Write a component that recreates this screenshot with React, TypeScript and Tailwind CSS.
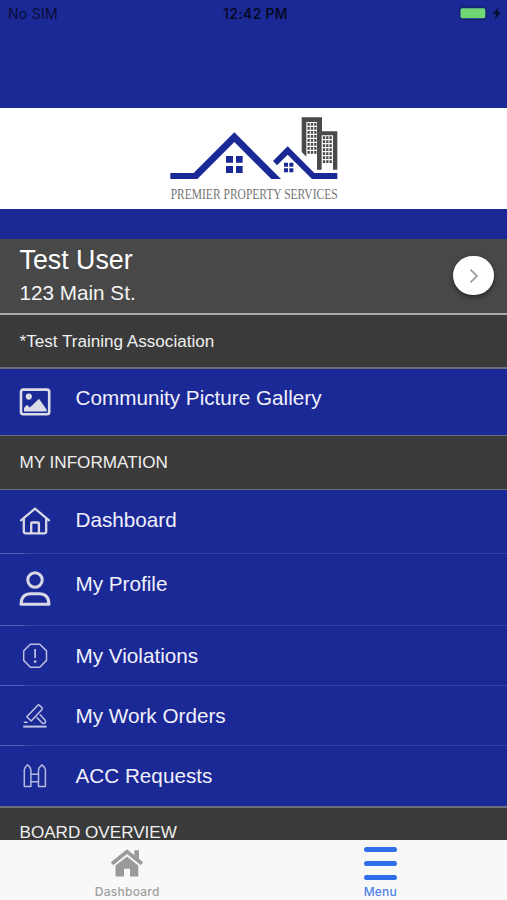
import type { ReactNode } from "react";

/** Company logo: two roofs, an office block and the name below. */
function Logo() {
  return (
    <svg
      width="176"
      height="90"
      viewBox="18 33 528 270"
      className="overflow-visible"
      role="img"
      aria-label="Premier Property Services"
    >
      <g fill="#1b2997">
        <path d="M31 204H101L223 82L363 222H334L223 111L112 222H31Z" />
        <path d="M339 168L383 124L463 204H532V222H456L383 149L351 181Z" />
        <path d="M198 153h21v20h-21zM228 153h20v20h-20zM198 183h21v21h-21zM228 183h20v21h-20z" />
        <path d="M372 173h12v12h-12zM388 173h12v12h-12zM372 190h12v12h-12zM388 190h12v12h-12z" />
      </g>
      <path
        d="M425 37H486V79H532V194H519V91H485V194H471V51H439V155L425 141Z"
        fill="#4b4a4a"
      />
      <g stroke="#4b4a4a" strokeWidth="7" strokeDasharray="8 4">
        <path d="M446 54V150M456 54V150M466 54V150" />
        <path d="M492 94V178M502 94V178M512 94V178" />
      </g>
      <text
        x="32"
        y="282"
        textLength="501"
        lengthAdjust="spacingAndGlyphs"
        fontFamily="'Liberation Serif', serif"
        fontSize="41"
        fill="#757373"
      >
        PREMIER PROPERTY SERVICES
      </text>
    </svg>
  );
}

function GalleryIcon() {
  return (
    <svg width="32" height="28" viewBox="0 0 32 28" fill="none">
      <rect x="2" y="1.6" width="28.2" height="24.6" rx="2.2" stroke="#dcdce6" strokeWidth="2.6" />
      <circle cx="9.8" cy="8.6" r="3.1" fill="#dcdce6" />
      <path d="M5 23.5V20L8 16.8L10.5 19.5L13 17.5L20 10.8L27.6 21.5V23.5Z" fill="#dcdce6" />
    </svg>
  );
}

function HomeIcon() {
  return (
    <svg
      width="32"
      height="28"
      viewBox="0 0 32 28"
      fill="none"
      stroke="#d9d9e6"
      strokeWidth="2.3"
      strokeLinejoin="round"
      strokeLinecap="round"
    >
      <path d="M2 13.3L16 1.7L30 13.3" />
      <path d="M4.8 12V24.3Q4.8 26.4 6.9 26.4H25.1Q27.2 26.4 27.2 24.3V12" />
      <path d="M12.2 26V16.2Q12.2 15.5 13 15.5H19Q19.9 15.5 19.9 16.2V26" />
    </svg>
  );
}

function ProfileIcon() {
  return (
    <svg width="32" height="36" viewBox="0 0 32 36" fill="none" stroke="#d9d9e6" strokeWidth="3">
      <circle cx="16" cy="9" r="7.2" />
      <path
        d="M2 33.3Q2.2 22.7 12 22.7H20Q29.8 22.7 30 33.3Z"
        strokeLinejoin="round"
      />
    </svg>
  );
}

function ViolationIcon() {
  return (
    <svg width="26" height="26" viewBox="0 0 26 26" fill="none" stroke="#b9bddf" strokeWidth="1.5">
      <path d="M8.4 1.2H17.8L24.5 7.9V17.4L17.8 24.2H8.4L1.7 17.4V7.9Z" strokeLinejoin="round" />
      <path d="M13.1 6V15" strokeWidth="1.8" />
      <circle cx="13.1" cy="18.6" r="1.4" fill="#b9bddf" stroke="none" />
    </svg>
  );
}

function GavelIcon() {
  return (
    <svg
      width="26"
      height="26"
      viewBox="0 0 26 26"
      fill="none"
      stroke="#c0c4e2"
      strokeWidth="1.5"
      strokeLinejoin="round"
    >
      <path d="M4.8 13.7L15.8 2.2Q16.6 1.5 17.4 2.2L20 4.8Q20.7 5.6 20 6.4L9.2 18Z" />
      <path d="M14.6 14.2L20 19.7Q21.4 21.2 23 19.9Q24.3 18.4 23 17L17.8 11.6" />
      <path d="M1.8 19.3H5.6" />
      <path d="M1.2 23.6H24.6" strokeWidth="2" />
    </svg>
  );
}

function FenceIcon() {
  return (
    <svg
      width="26"
      height="26"
      viewBox="0 0 26 26"
      fill="none"
      stroke="#b4b9dd"
      strokeWidth="1.5"
      strokeLinejoin="round"
    >
      <path d="M2.3 23.5V6.6Q3 4 5.6 1.8Q8.2 4 8.9 6.6V23.5Z" />
      <path d="M16.5 23.5V6.6Q17.2 4 20 1.8Q22.7 4 23.4 6.6V23.5Z" />
      <path d="M8.9 11.2H16.5M8.9 18.8H16.5" />
    </svg>
  );
}

function SectionHeader({ className, children }: { className: string; children: ReactNode }) {
  return (
    <h2
      className={`shrink-0 border-[#6b6e7c] bg-[#3a3a3a] pl-[19.5px] leading-5 text-[#f0f0f0] ${className}`}
    >
      {children}
    </h2>
  );
}

type MenuItem = {
  label: string;
  icon: ReactNode;
  row: string;
  last?: boolean;
};

const ITEMS: MenuItem[] = [
  { label: "Dashboard", icon: <HomeIcon />, row: "h-16 pt-[17px]" },
  { label: "My Profile", icon: <ProfileIcon />, row: "h-[72px] pt-[17px]" },
  { label: "My Violations", icon: <ViolationIcon />, row: "h-[60px] pt-[17px]" },
  { label: "My Work Orders", icon: <GavelIcon />, row: "h-[60px] pt-[17px]" },
  { label: "ACC Requests", icon: <FenceIcon />, row: "h-[60px] pt-[17px]", last: true },
];

function MenuRow({ item }: { item: MenuItem }) {
  return (
    <li className="flex flex-col">
      <div className={`flex items-start ${item.row}`}>
        <span className="flex w-[69px] shrink-0 justify-center">{item.icon}</span>
        <span className="pl-[6.5px] text-[20.7px] leading-[26px]">{item.label}</span>
      </div>
      {/* The hairline is brighter under the icon inset */}
      {!item.last && (
        <div className="-mt-px flex h-px">
          <span className="w-[25px] bg-[#5360b7]" />
          <span className="flex-1 bg-[#3442a0]" />
        </div>
      )}
    </li>
  );
}

export default function App() {
  return (
    <div className="flex h-[900px] w-[507px] flex-col overflow-hidden bg-[#1b2997] font-['Liberation_Sans',Arial,sans-serif] text-[#f0f0fa]">
      {/* Status bar */}
      <div className="grid h-[108px] shrink-0 grid-cols-3 items-start px-[8px] pt-1 font-['Inter',sans-serif] text-[14px] leading-5 text-[#080d36]">
        <span className="tracking-[0.3px]">No SIM</span>
        <span className="pl-1 text-center text-[13.8px] font-semibold tracking-[0.4px] text-[#060926]">
          12:42 PM
        </span>
        <span className="flex justify-end">
          <svg width="46" height="18" viewBox="0 0 46 18" className="-mr-1">
            <rect x="2.3" y="3" width="27" height="12.5" rx="3.2" fill="none" stroke="#14205f" />
            <rect x="3.5" y="4.3" width="24.8" height="10" rx="1.8" fill="#70d777" />
            <path d="M30.8 7.2q1.4 1.8 0 3.8z" fill="#14205f" />
            <path d="M41.4 3.4L35.6 10H39.2L37.8 15.2L43.8 8.3H40.2Z" fill="#070b27" />
          </svg>
        </span>
      </div>

      <header className="flex h-[101px] shrink-0 justify-center bg-white pt-2">
        <Logo />
      </header>

      {/* Signed-in user */}
      <section className="mt-[30px] flex h-[76px] shrink-0 items-start justify-between border-b-2 border-[#aaaaaa] bg-[#484848] pr-[13px] pl-[19.5px]">
        <div>
          <div className="pt-[5px] text-[26.8px] leading-[32px] text-white">Test User</div>
          <div className="pt-[5px] text-[20.7px] leading-6 text-[#f4f4f4]">123 Main St.</div>
        </div>
        <button
          type="button"
          aria-label="Open profile"
          className="mt-[17px] flex h-[39px] w-[41px] items-center justify-center rounded-full bg-white shadow-[0_2px_5px_rgba(0,0,0,0.5)]"
        >
          <svg width="12" height="18" viewBox="0 0 12 18" fill="none" stroke="#a3a3a3" strokeWidth="2">
            <path d="M2.5 2.6L9 9L2.5 15.4" />
          </svg>
        </button>
      </section>

      <SectionHeader className="h-[54px] border-b-2 pt-[17px] text-[17.1px]">
        *Test Training Association
      </SectionHeader>

      <div className="flex h-[66px] shrink-0 items-start pt-[19px]">
        <span className="flex w-[69px] shrink-0 justify-center">
          <GalleryIcon />
        </span>
        <span className="-mt-[3px] pl-[6.5px] text-[20.7px] leading-[26px]">
          Community Picture Gallery
        </span>
      </div>

      <SectionHeader className="h-[55px] border-y-[1.5px] pt-[17px] text-[17.1px]">
        MY INFORMATION
      </SectionHeader>

      <ul className="shrink-0">
        {ITEMS.map((item) => (
          <MenuRow key={item.label} item={item} />
        ))}
      </ul>

      <SectionHeader className="h-[34px] border-t-2 pt-[15px] text-[17.1px]">
        BOARD OVERVIEW
      </SectionHeader>

      {/* Bottom tabs */}
      <nav className="grid min-h-0 flex-1 grid-cols-2 bg-[#f8f8f8] font-['Inter',sans-serif] text-xs leading-4 font-medium">
        <a className="flex flex-col items-center pt-[9px] pl-px text-[#a0a0a0]">
          <svg width="34" height="28" viewBox="0 0 34 28">
            <path
              d="M2 14.7L17 2.6L32 14.7"
              fill="none"
              stroke="#9a9a9a"
              strokeWidth="3.8"
            />
            <path d="M24.3 1.2H29V12L24.3 8Z" fill="#9a9a9a" />
            <path d="M5.5 16.6L17 7.4L28.3 16.6V27.5H20V19.8H14V27.5H5.5Z" fill="#9a9a9a" />
          </svg>
          <span className="mt-[7px] tracking-[0.25px]">Dashboard</span>
        </a>
        <a className="flex flex-col items-center pt-[7px] text-[#4d83e6]">
          <span className="flex w-[33px] flex-col gap-[9.5px]">
            <span className="h-[4.5px] rounded-full bg-[#2f70e8]" />
            <span className="h-[4.5px] rounded-full bg-[#2f70e8]" />
            <span className="h-[4.5px] rounded-full bg-[#2f70e8]" />
          </span>
          <span className="mt-[4.5px] tracking-[0.2px]">Menu</span>
        </a>
      </nav>
    </div>
  );
}
